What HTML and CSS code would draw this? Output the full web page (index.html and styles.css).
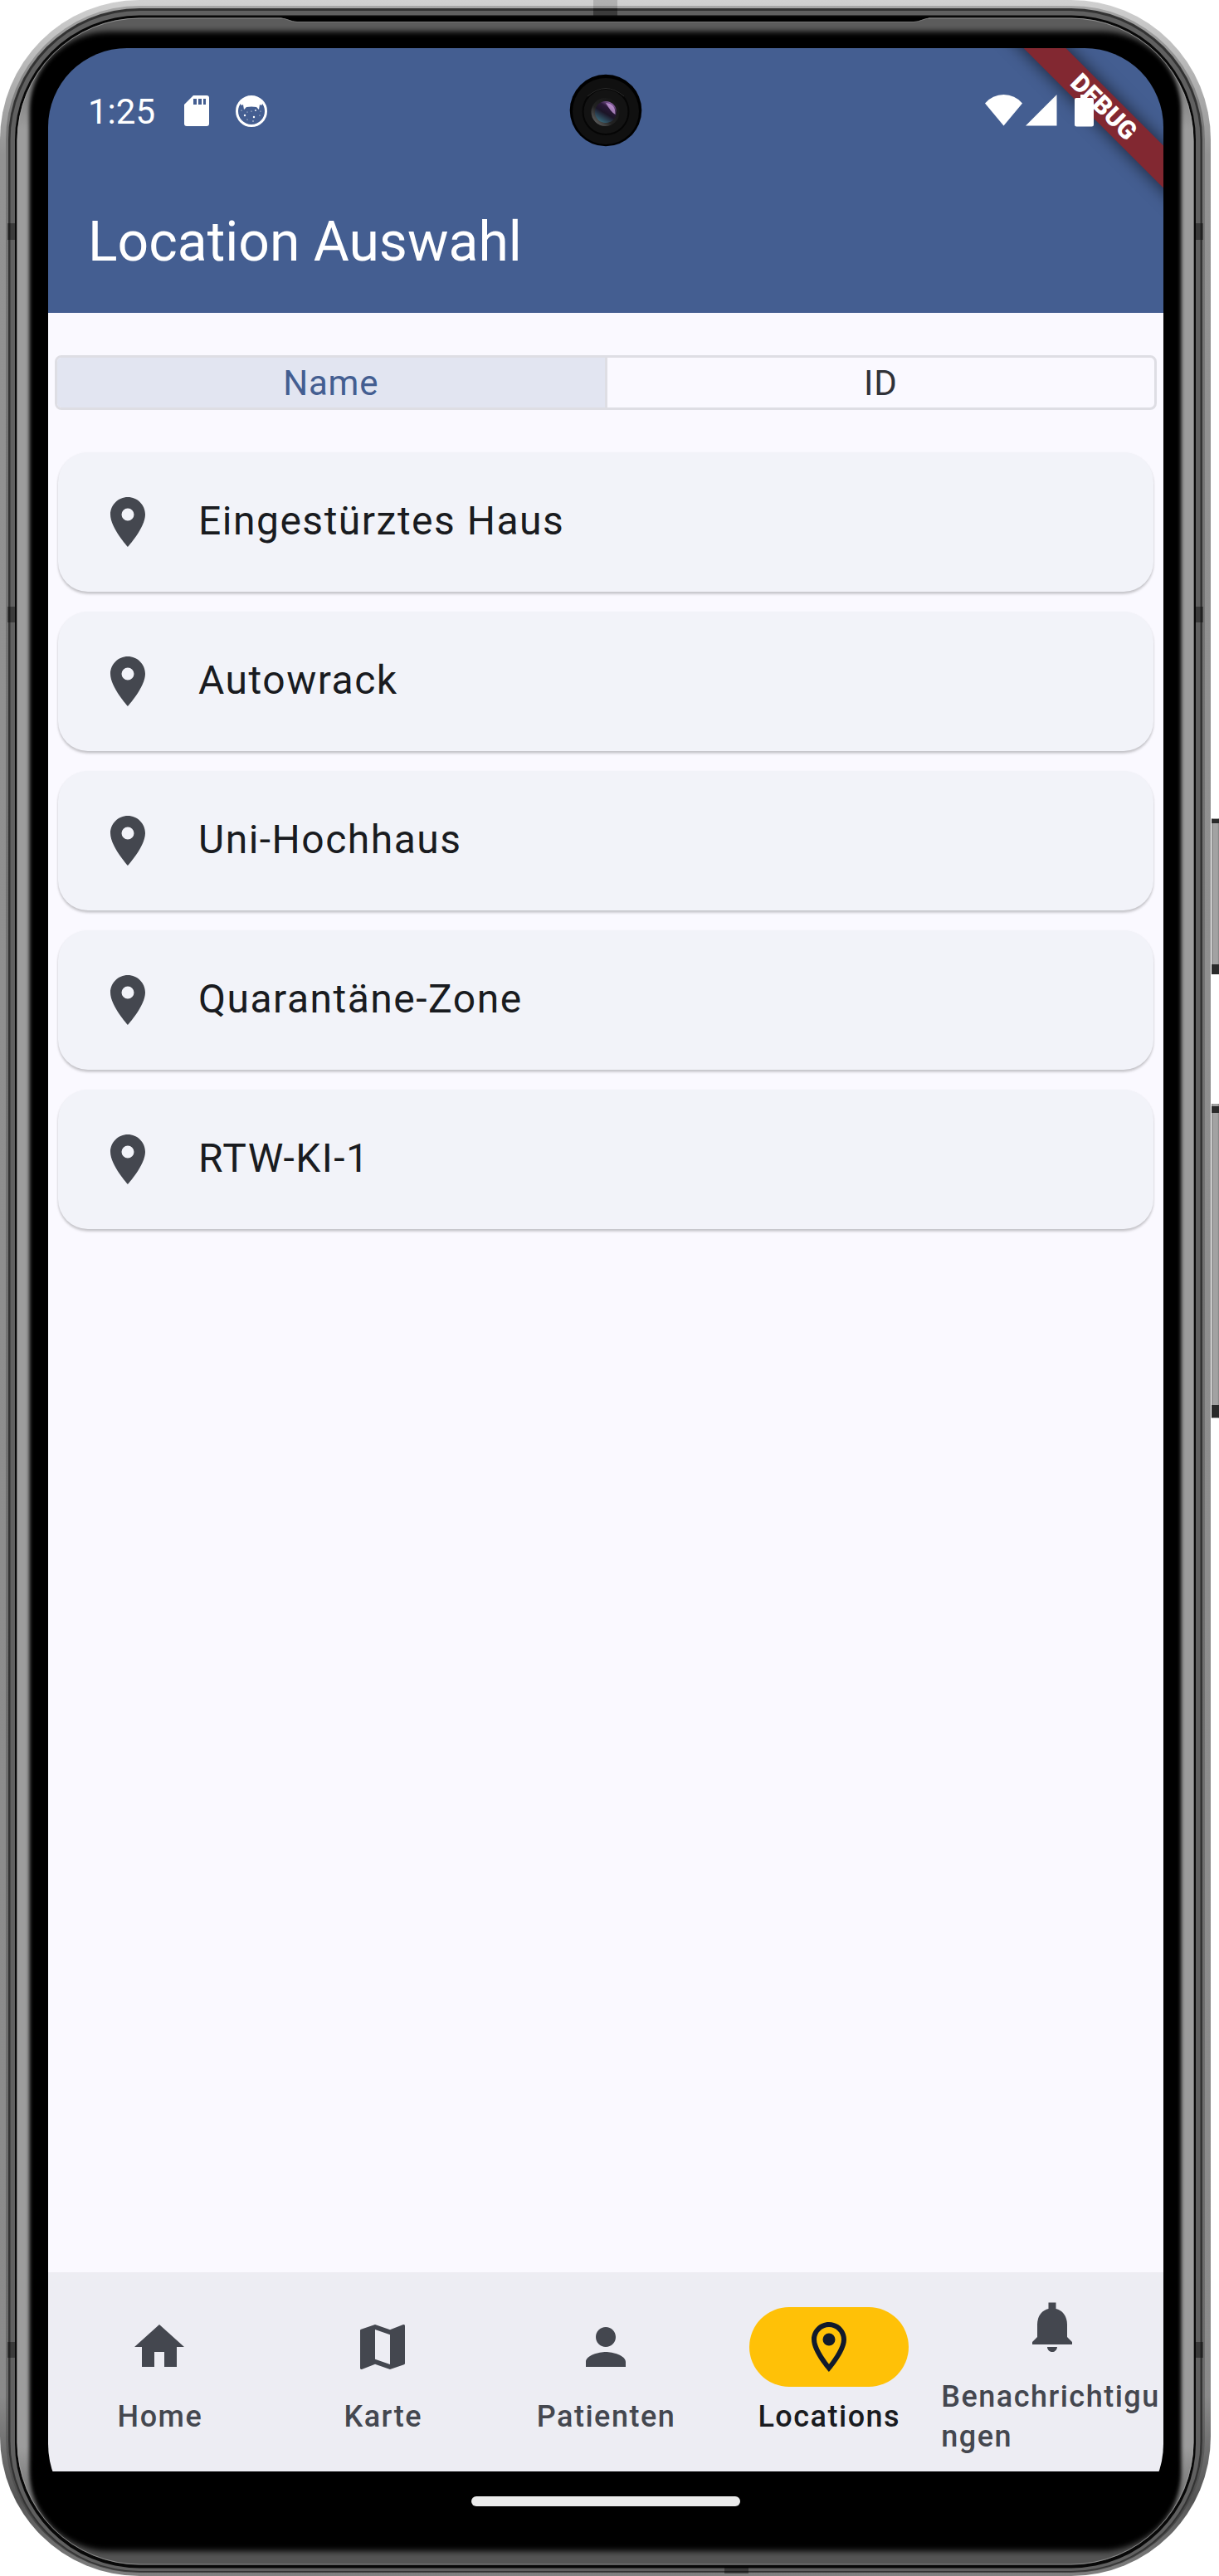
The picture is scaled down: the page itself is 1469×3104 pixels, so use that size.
FILE: index.html
```html
<!DOCTYPE html>
<html lang="de">
<head>
<meta charset="utf-8">
<title>Location Auswahl</title>
<link rel="stylesheet" href="styles.css">
</head>
<body>
<svg class="sprite" width="0" height="0">
  <symbol id="pin" viewBox="0 0 24 24"><path d="M12 2C8.13 2 5 5.13 5 9c0 5.25 7 13 7 13s7-7.75 7-13c0-3.87-3.13-7-7-7zm0 9.500a2.500 2.500 0 0 1 0-5 2.500 2.500 0 0 1 0 5z"/></symbol>
</svg>
<div class="phone">
  <svg class="frame" width="1469" height="3104" viewBox="0 0 1469 3104" fill="none">
    <defs>
      <linearGradient id="rim" gradientUnits="userSpaceOnUse" x1="0" y1="0" x2="0" y2="3104">
        <stop offset="0" stop-color="#d0d0d0"/><stop offset=".02" stop-color="#bdbdbd"/><stop offset=".06" stop-color="#929292"/><stop offset=".93" stop-color="#8a8a8a"/><stop offset=".97" stop-color="#555"/><stop offset="1" stop-color="#808080"/>
      </linearGradient>
      <linearGradient id="rim2" gradientUnits="userSpaceOnUse" x1="0" y1="0" x2="0" y2="3104">
        <stop offset="0" stop-color="#a8a8a8"/><stop offset=".05" stop-color="#777"/><stop offset=".93" stop-color="#6c6c6c"/><stop offset=".98" stop-color="#444"/><stop offset="1" stop-color="#444"/>
      </linearGradient>
      <linearGradient id="gloss" gradientUnits="userSpaceOnUse" x1="0" y1="0" x2="0" y2="3104">
        <stop offset="0" stop-color="#5c5c5c"/><stop offset=".015" stop-color="#5c5c5c"/><stop offset=".05" stop-color="#9c9c9c"/><stop offset=".95" stop-color="#9c9c9c"/><stop offset=".985" stop-color="#545454"/><stop offset="1" stop-color="#545454"/>
      </linearGradient>
      <linearGradient id="key" x1="0" x2="1" y1="0" y2="0"><stop offset="0" stop-color="#777"/><stop offset=".2" stop-color="#a2a2a2"/><stop offset=".8" stop-color="#a2a2a2"/><stop offset="1" stop-color="#808080"/></linearGradient>
      <clipPath id="glass"><rect x="20.500" y="21.500" width="1418" height="3069" rx="148"/></clipPath>
      <filter id="soft" filterUnits="userSpaceOnUse" x="0" y="0" width="1469" height="3104"><feGaussianBlur stdDeviation="2 3.500"/></filter>
    </defs>
    <rect width="1459" height="3104" rx="168" fill="url(#rim)"/>
    <rect x="7" y="7" width="1445" height="3093" rx="161" fill="url(#rim2)"/>
    <rect x="10" y="10" width="1439" height="3089" rx="158" fill="#333"/>
    <rect x="12.500" y="13" width="1434" height="3085" rx="156" fill="#606060"/>
    <rect x="18" y="18.500" width="1423" height="3076" rx="150" fill="#080808"/>
    <rect x="20.500" y="21.500" width="1418" height="3069" rx="148" fill="url(#gloss)"/>
    <g clip-path="url(#glass)"><rect x="35.500" y="38" width="1388" height="3036" rx="96" fill="#000" filter="url(#soft)"/></g>
    <rect x="21" y="22" width="1417" height="3068" rx="147.500" stroke="#a4a4a4" stroke-opacity=".7"/>
    <path d="M336 20.500H1122L1105 26H355z" fill="#000"/>
    <path d="M338 22C346 22 350 26.500 358 26.500H1101C1109 26.500 1113 22 1121 22" stroke="#777"/>
    <g fill="#000" fill-opacity=".38">
      <path d="M715 0h29v10h-29z" fill-opacity=".15"/><path d="M715 10h29v9h-29zM873 3093h29v8h-29z"/>
      <path d="M9 269h9v20H9zM9 731h9v19H9zM9 2822h9v19H9zM1441 269h9v20h-9zM1441 731h9v19h-9zM1441 2822h9v19h-9z"/>
    </g>
    <g>
      <rect x="1460" y="986" width="9" height="188" fill="url(#key)"/><path d="M1460 987h9v5h-9zM1460 1162h9v12h-9z" fill="#2a2a2a"/>
      <rect x="1460" y="1330" width="9" height="379" fill="url(#key)"/><path d="M1460 1333h9v8h-9zM1460 1693h9v15h-9z" fill="#2a2a2a"/>
    </g>
  </svg>

  <div class="screen">
    <header class="top">
      <div class="status">
        <span class="time">1:25</span>
        <svg class="sd" width="30" height="38" viewBox="0 0 30 38"><path d="M11 0H27a3 3 0 0 1 3 3V34a3 3 0 0 1-3 3H3a3 3 0 0 1-3-3V11z" fill="#fff"/><path d="M11 4h4v7h-4zM17 4h4v7h-4zM23 4h3v7h-3z" fill="#445e91"/></svg>
        <svg class="cat" width="38" height="38" viewBox="0 0 38 38"><circle cx="19" cy="19" r="17.500" fill="none" stroke="#fff" stroke-width="3"/><path d="M5 9Q10 2 19 2T33 9L31 12 29 11 28 17 25 14Q19 13 13 14L10 17 9 11 7 12z" fill="#fff"/><g fill="#fff"><circle cx="11" cy="24" r="1.200"/><circle cx="22" cy="26" r="1.200"/><circle cx="24" cy="18" r=".9"/><circle cx="19" cy="19" r=".6"/><circle cx="14" cy="29" r=".6"/><circle cx="21" cy="31" r=".7"/><circle cx="29" cy="24" r=".6"/><circle cx="7" cy="18" r=".6"/><circle cx="14" cy="20" r=".5"/><circle cx="30" cy="19" r=".5"/></g></svg>
        <svg class="radio" width="87" height="39" viewBox="0 0 87 39" fill="#fff"><path d="M0 10.500Q9 0 22.500 0T45 10.500L22.500 37.500z"/><path d="M86.500 0V37.500H49z"/></svg>
      </div>
      <h1>Location Auswahl</h1>
      <div class="banner"><span>DEBUG</span></div>
      <svg class="battery" width="23" height="39" viewBox="0 0 23 39"><path d="M7 0h8v4h6a2 2 0 0 1 2 2V36a2.500 2.500 0 0 1-2.500 2.500h-18A2.500 2.500 0 0 1 0 36V6a2 2 0 0 1 2-2h5z" fill="#fff"/></svg>
      <svg class="camera" width="88" height="88" viewBox="0 0 88 88">
        <defs>
          <linearGradient id="lens" x1=".8" y1="0" x2=".2" y2="1"><stop offset="0" stop-color="#b07ccb"/><stop offset=".3" stop-color="#2a1838"/><stop offset=".55" stop-color="#1b1527"/><stop offset="1" stop-color="#3a7384"/></linearGradient>
          <linearGradient id="ring" x1="1" y1="0" x2="0" y2="1"><stop offset="0" stop-color="#111"/><stop offset=".6" stop-color="#222"/><stop offset="1" stop-color="#777"/></linearGradient>
        </defs>
        <circle cx="44" cy="44" r="43.300" fill="#000"/><circle cx="44" cy="45" r="40" fill="#101010"/>
        <circle cx="44" cy="45.500" r="27.500" fill="#131313" stroke="#050505" stroke-width="2"/><path d="M22 27Q44 8 66 27" fill="none" stroke="#2b2b2b"/>
        <circle cx="43.500" cy="46" r="17" fill="url(#ring)"/><circle cx="44" cy="46" r="13" fill="url(#lens)"/><path d="M44 35Q56 36 55.500 49Q50 46 44 35z" fill="#d6a8ea" opacity=".7"/>
      </svg>
    </header>

    <main>
      <div class="toggle"><button class="on">Name</button><button>ID</button></div>
      <ul class="list">
        <li><svg><use href="#pin"/></svg><span>Eingestürztes Haus</span></li>
        <li><svg><use href="#pin"/></svg><span>Autowrack</span></li>
        <li><svg><use href="#pin"/></svg><span>Uni-Hochhaus</span></li>
        <li><svg><use href="#pin"/></svg><span>Quarantäne-Zone</span></li>
        <li><svg><use href="#pin"/></svg><span>RTW-KI-1</span></li>
      </ul>
    </main>

    <nav>
      <a><i><svg viewBox="0 0 24 24"><path d="M10 20v-6h4v6h5v-8h3L12 3 2 12h3v8z"/></svg></i><span>Home</span></a>
      <a><i><svg viewBox="0 0 24 24"><path d="M20.500 3l-.16.03L15 5.100 9 3 3.360 4.900c-.21.070-.36.250-.36.480V20.500c0 .28.220.5.500.5l.16-.03L9 18.900l6 2.100 5.640-1.900c.21-.07.36-.25.36-.48V3.500c0-.28-.22-.5-.5-.5zM15 19l-6-2.110V5l6 2.110V19z"/></svg></i><span>Karte</span></a>
      <a><i><svg viewBox="0 0 24 24"><path d="M12 12c2.210 0 4-1.790 4-4s-1.790-4-4-4-4 1.790-4 4 1.790 4 4 4zm0 2c-2.670 0-8 1.340-8 4v2h16v-2c0-2.660-5.330-4-8-4z"/></svg></i><span>Patienten</span></a>
      <a class="active"><i><svg viewBox="0 0 24 24"><path d="M12 2C8.130 2 5 5.130 5 9c0 5.250 7 13 7 13s7-7.750 7-13c0-3.870-3.130-7-7-7zM7 9c0-2.760 2.240-5 5-5s5 2.240 5 5c0 2.880-2.880 7.190-5 9.880C9.920 16.210 7 11.850 7 9z"/><circle cx="12" cy="9" r="2.500"/></svg></i><span>Locations</span></a>
      <a><i><svg viewBox="0 0 24 24"><path d="M12 22c1.100 0 2-.9 2-2h-4c0 1.100.9 2 2 2zm6-6v-5c0-3.070-1.630-5.640-4.500-6.320V2.200h-3v2.480C7.640 5.360 6 7.920 6 11v5l-2 2v1h16v-1l-2-2z"/></svg></i><span>Benachrichtigungen</span></a>
    </nav>
    <div class="home-area"><div class="home-handle"></div></div>
  </div>
</div>
</body>
</html>
```
FILE: styles.css
```css
* { box-sizing: border-box; }
body { margin: 0; background: #fff; font-family: Roboto, sans-serif; }
.sprite { display: none; }
.phone { position: relative; width: 1469px; height: 3104px; padding: 58px 67px 54px 58px; }
.frame { position: absolute; left: 0; top: 0; }
.screen {
  position: relative;
  display: flex;
  flex-direction: column;
  width: 1344px;
  height: 2992px;
  border-radius: 95px 95px 105px 105px;
  overflow: hidden;
}

/* Header */
.top { position: relative; flex: none; height: 319px; background: #445e91; color: #fff; overflow: hidden; }
.status { display: flex; align-items: center; height: 151px; padding: 0 128px 0 48px; }
.time { width: 116px; padding-top: 2px; font-size: 42px; line-height: 50px; }
.sd { margin-right: 32px; }
.radio { margin-left: auto; }
h1 { margin: 0; padding-left: 48px; font-size: 66px; line-height: 166px; font-weight: 400; }
.banner {
  position: absolute;
  right: -128px;
  top: 53px;
  width: 400px;
  height: 36px;
  transform: rotate(45deg);
  background: #822831;
  box-shadow: 0 0 18px 3px rgba(0, 0, 0, .5);
  text-align: center;
  font-size: 30.6px;
  line-height: 36px;
  font-weight: 900;
}
.battery { position: absolute; right: 84px; top: 56px; }
.camera { position: absolute; left: 628px; top: 31px; }

/* Content */
main { flex: 1; padding: 51px 8px 0; background: #faf9ff; }
.toggle { display: flex; height: 66px; border: 3px solid #dedee4; border-radius: 8px; overflow: hidden; }
.toggle button {
  flex: 1;
  border: 0;
  padding: 2px 0 0;
  background: none;
  color: #303238;
  font: 400 42px/58px Roboto, sans-serif;
  letter-spacing: .75px;
}
.toggle .on { background: #e2e5f1; color: #445e91; border-right: 3px solid #dedee4; }
.list { display: flex; flex-direction: column; gap: 24px; margin: 51px 4px 0; padding: 0; list-style: none; }
.list li {
  display: flex;
  align-items: center;
  gap: 49px;
  height: 168px;
  padding: 0 48px;
  border-radius: 36px;
  background: #f2f3f9;
  box-shadow: 0 3px 3px rgba(0, 0, 0, .17), 0 1px 3px rgba(0, 0, 0, .08);
  color: #191b20;
  font-size: 48px;
  letter-spacing: 1.5px;
}
.list span { padding-bottom: 4px; }
.list svg { width: 72px; height: 72px; fill: #44474f; }

/* Bottom navigation */
nav { flex: none; display: grid; grid-template-columns: repeat(5, 1fr); height: 240px; background: #ededf3; color: #44474f; }
nav a { display: flex; flex-direction: column; align-items: center; justify-content: center; gap: 12px; min-width: 0; }
nav i { display: flex; align-items: center; justify-content: center; width: 192px; height: 96px; border-radius: 48px; }
nav svg { width: 72px; height: 72px; fill: #44474f; }
nav span { max-width: 100%; padding-left: 1px; font-size: 36px; line-height: 48px; font-weight: 500; letter-spacing: 1.5px; word-break: break-all; }
.active { color: #191b20; }
.active i { background: #ffc107; }
.active svg { fill: #111a2c; }
.home-area { display: flex; flex: none; justify-content: center; align-items: center; height: 72px; background: #000; }
.home-handle { width: 324px; height: 12px; border-radius: 6px; background: #ebebeb; }
```
